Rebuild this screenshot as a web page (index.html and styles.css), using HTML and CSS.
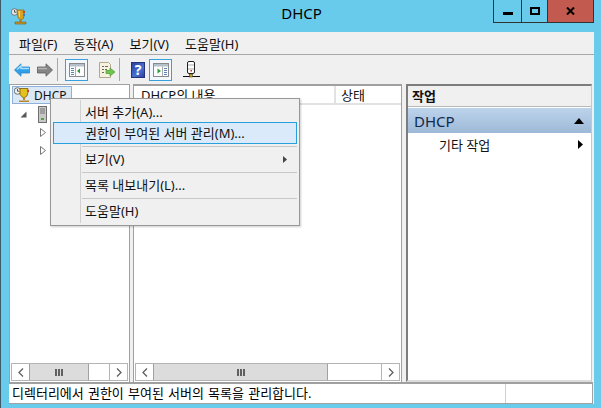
FILE: index.html
```html
<!DOCTYPE html>
<html lang="ko">
<head>
    <meta charset="UTF-8">
    <title>DHCP</title>
    <link rel="stylesheet" href="styles.css">
</head>
<body>
    <div class="window">
        <div class="titlebar">
            <svg class="app-icon" width="16" height="17" viewBox="0 0 16 17">
                <circle cx="3.500" cy="4" r="3.300" fill="#e4e4e4" stroke="#666" stroke-width=".8"/>
                <path d="M3.500 2v2.200h2" fill="none" stroke="#333" stroke-width=".8"/>
                <path d="M6 2h7v6q0 3-3 4-2-.5-3-2.500z" fill="#d8a322" stroke="#8a6514" stroke-width=".7"/>
                <path d="M7.500 3h1.500v6h-1z" fill="#f2d66a"/>
                <rect x="12" y="3" width="2" height="2" fill="#c8402f"/>
                <rect x="12" y="6" width="2" height="2" fill="#3a7bd5"/>
                <path d="M8.500 12h2v2h-2z" fill="#a87a1e"/>
                <path d="M4 14h11v2H4z" fill="#c8952c" stroke="#7a5a10" stroke-width=".6"/>
            </svg>
            <div class="title">DHCP</div>
            <div class="caption-btns">
                <div class="cap-btn cap-min"><span></span></div>
                <div class="cap-btn cap-max"><span></span></div>
                <div class="cap-btn cap-close">
                    <svg width="9" height="8" viewBox="0 0 9 8"><path d="M1 .5l7 7M8 .5l-7 7" stroke="#000" stroke-width="2" fill="none"/></svg>
                </div>
            </div>
        </div>

        <div class="client">
            <div class="menubar">
                <span>파일(F)</span>
                <span>동작(A)</span>
                <span>보기(V)</span>
                <span>도움말(H)</span>
            </div>

            <div class="toolbar">
                <div class="tool">
                    <svg width="16" height="14" viewBox="0 0 16 14"><path d="M.5 7L7 .8V4h8.500v6H7v3.200z" fill="#2f9fe8" stroke="#2a86cc" stroke-width=".8"/><path d="M3 6.500L7 3v2.500h8" fill="none" stroke="#a8e0ff" stroke-width="1.500"/></svg>
                </div>
                <div class="tool">
                    <svg width="16" height="14" viewBox="0 0 16 14"><path d="M15.500 7L9 .8V4H.5v6H9v3.200z" fill="#858585" stroke="#5a5a5a" stroke-width=".8"/><path d="M1 5.500h9" stroke="#b5b5b5" stroke-width="1.500"/></svg>
                </div>
                <div class="tool-sep"></div>
                <div class="tool tool-on tool-after-sep">
                    <svg width="16" height="14" viewBox="0 0 16 14"><rect x=".5" y=".5" width="15" height="13" fill="#fdfdfd" stroke="#8a8a8a"/><rect x="1" y="1" width="14" height="2.500" fill="#b4c0cc"/><path d="M2 5.500h3M2 7.500h3M2 9.500h3M2 11.500h3" stroke="#5b86b5"/><path d="M6.500 3.500V13" stroke="#aaa"/><path d="M11 5.500v5L8 8z" fill="#2e9b3c"/></svg>
                </div>
                <div class="tool tool-doc">
                    <svg width="17" height="16" viewBox="0 0 17 16"><path d="M.5.500h9l2 2v13H.5z" fill="#f7f1df" stroke="#b3a88e"/><path d="M3 4.500h2M3 7.500h2M3 10.500h2M6 4.500h3M6 7.500h2" stroke="#6a6a6a"/><path d="M7 8.500h4V6l5 4-5 4v-2.500H7z" fill="#72c650" stroke="#4a9c34" stroke-width=".7"/></svg>
                </div>
                <div class="tool-sep tool-sep-2"></div>
                <div class="help-icon">?</div>
                <div class="tool tool-on tool-after-help">
                    <svg width="16" height="14" viewBox="0 0 16 14"><rect x=".5" y=".5" width="15" height="13" fill="#fdfdfd" stroke="#8a8a8a"/><rect x="1" y="1" width="14" height="2.500" fill="#b4c0cc"/><path d="M11 5.500h3M11 7.500h3M11 9.500h3M11 11.500h3" stroke="#5b86b5"/><path d="M9.500 3.500V13" stroke="#aaa"/><path d="M4.500 5.500v5L8 8z" fill="#2e9b3c"/></svg>
                </div>
                <div class="tool tool-mic">
                    <svg width="17" height="18" viewBox="0 0 17 18"><rect x="4.500" y=".5" width="7" height="12" rx="1.500" fill="#fff" stroke="#222"/><path d="M5 4h6M5 8h6" stroke="#aaa"/><rect x="7.500" y="9" width="1.500" height="1.500" fill="#d22"/><path d="M0 15.500h17" stroke="#111"/><rect x="6.500" y="13" width="3" height="3" fill="#c9a227" stroke="#222" stroke-width=".5"/></svg>
                </div>
            </div>

            <div class="panes">
                <div class="pane pane-tree">
                    <div class="pane-body">
                        <div class="tree-root">
                            <svg width="16" height="16" viewBox="0 0 16 16">
                                <circle cx="3.500" cy="4" r="3.300" fill="#eee" stroke="#555" stroke-width=".8"/>
                                <path d="M3.500 2v2.200h2" fill="none" stroke="#333" stroke-width=".8"/>
                                <path d="M6 1.500h8v4q0 4-4 5.500-2.500-1-4-3.500z" fill="#e3c21c" stroke="#7a5a10" stroke-width=".8"/>
                                <rect x="13" y="3" width="2" height="2" fill="#c8402f"/>
                                <path d="M9 11h2v2H9zM5 13.500h10V15H5z" fill="#b8862b"/>
                            </svg>
                            <span>DHCP</span>
                        </div>
                        <div class="tree-node">
                            <svg width="7" height="7" viewBox="0 0 7 7"><path d="M6.500 .5v6h-6z" fill="#595959"/></svg>
                            <svg width="9" height="17" viewBox="0 0 9 17"><rect x=".5" y=".5" width="8" height="16" fill="#c8c8c8" stroke="#6e6e6e"/><path d="M2 3h5M2 5h5M2 7h5" stroke="#777"/><rect x="3" y="12" width="3" height="2" fill="#5aa03c"/></svg>
                        </div>
                        <div class="tree-child">
                            <svg width="6" height="9" viewBox="0 0 6 9"><path d="M.5 .5l5 4-5 4z" fill="#fff" stroke="#777"/></svg>
                        </div>
                        <div class="tree-child">
                            <svg width="6" height="9" viewBox="0 0 6 9"><path d="M.5 .5l5 4-5 4z" fill="#fff" stroke="#777"/></svg>
                        </div>
                    </div>
                    <div class="scrollbar">
                        <div class="sb-btn"><svg width="6" height="9" viewBox="0 0 6 9"><path d="M5 .5l-4 4 4 4" fill="none" stroke="#606060" stroke-width="1.300"/></svg></div>
                        <div class="sb-thumb sb-thumb-tree"><i></i><i></i><i></i></div>
                        <div class="sb-track"></div>
                        <div class="sb-btn"><svg width="6" height="9" viewBox="0 0 6 9"><path d="M1 .5l4 4-4 4" fill="none" stroke="#606060" stroke-width="1.300"/></svg></div>
                    </div>
                </div>

                <div class="pane pane-list">
                    <div class="list-head">
                        <div class="col col-name">DHCP의 내용</div>
                        <div class="col col-state">상태</div>
                    </div>
                    <div class="pane-body"></div>
                    <div class="scrollbar">
                        <div class="sb-btn"><svg width="6" height="9" viewBox="0 0 6 9"><path d="M5 .5l-4 4 4 4" fill="none" stroke="#606060" stroke-width="1.300"/></svg></div>
                        <div class="sb-thumb sb-thumb-list"><i></i><i></i><i></i></div>
                        <div class="sb-track"></div>
                        <div class="sb-btn"><svg width="6" height="9" viewBox="0 0 6 9"><path d="M1 .5l4 4-4 4" fill="none" stroke="#606060" stroke-width="1.300"/></svg></div>
                    </div>
                </div>

                <div class="pane-actions">
                    <div class="actions-head">작업</div>
                    <div class="actions-group">
                        <span>DHCP</span>
                        <svg width="10" height="6" viewBox="0 0 10 6"><path d="M5 0l5 6H0z" fill="#000"/></svg>
                    </div>
                    <div class="actions-item">
                        <span>기타 작업</span>
                        <svg width="5" height="9" viewBox="0 0 5 9"><path d="M0 0l5 4.500L0 9z" fill="#000"/></svg>
                    </div>
                </div>
            </div>

            <div class="statusbar">
                <div class="status-main">디렉터리에서 권한이 부여된 서버의 목록을 관리합니다.</div>
                <div class="status-side"></div>
            </div>
        </div>

        <div class="context-menu">
            <div class="cm-item cm-first">서버 추가(A)...</div>
            <div class="cm-item cm-active">권한이 부여된 서버 관리(M)...</div>
            <div class="cm-sep cm-sep-top"></div>
            <div class="cm-item cm-sub">보기(V)
                <svg width="4" height="7" viewBox="0 0 4 7"><path d="M0 0l4 3.500L0 7z" fill="#444"/></svg>
            </div>
            <div class="cm-sep"></div>
            <div class="cm-item">목록 내보내기(L)...</div>
            <div class="cm-sep"></div>
            <div class="cm-item">도움말(H)</div>
        </div>
    </div>
</body>
</html>
```

FILE: styles.css
```css
* {
    box-sizing: border-box;
}

html, body {
    margin: 0;
    padding: 0;
}

body {
    width: 601px;
    height: 408px;
    overflow: hidden;
    font-family: "Noto Sans", "Noto Sans CJK KR", sans-serif;
    font-size: 13px;
    color: #111;
}

.window {
    position: relative;
    width: 601px;
    height: 408px;
    background: #69cbec;
    border-left: 1px solid #3c5a68;
    padding: 0 7px 4px 8px;
    display: flex;
    flex-direction: column;
}

.titlebar {
    height: 32px;
    flex: none;
    display: flex;
    position: relative;
}

.app-icon {
    margin-top: 8px;
    margin-left: 2px;
}

.title {
    position: absolute;
    left: 0;
    right: 0;
    top: 3px;
    text-align: center;
    font-size: 15px;
    line-height: 20px;
    color: #000;
}

.caption-btns {
    position: absolute;
    right: 0;
    top: 0;
    display: flex;
    height: 23px;
    border: 1px solid #333;
    border-top: none;
}

.cap-btn {
    display: flex;
    align-items: center;
    justify-content: center;
}

.cap-min {
    width: 28px;
    border-right: 1px solid #333;
}

.cap-min span {
    display: block;
    width: 10px;
    height: 3px;
    background: #000;
    margin-top: 5px;
}

.cap-max {
    width: 26px;
    border-right: 1px solid #333;
}

.cap-max span {
    display: block;
    width: 10px;
    height: 8px;
    border: 2px solid #000;
}

.cap-close {
    width: 45px;
    background: #c35a50;
}

.client {
    flex: 1;
    min-height: 0;
    display: flex;
    flex-direction: column;
    background: #f0f0f0;
}

.menubar {
    height: 23px;
    flex: none;
    display: flex;
    align-items: center;
    gap: 16px;
    padding-left: 10px;
    border-bottom: 1px solid #a8a8a8;
}

.toolbar {
    height: 29px;
    flex: none;
    display: flex;
    align-items: center;
    padding-left: 1px;
    background: #f0f0f0;
}

.tool {
    width: 23px;
    height: 22px;
    flex: none;
    display: flex;
    align-items: center;
    justify-content: center;
}

.tool-on {
    background: #f2f8fd;
    border: 1px solid #3aa0dc;
}

.tool-after-sep {
    margin-left: 7px;
}

.tool-doc {
    margin-left: 8px;
}

.tool-after-help {
    margin-left: 4px;
}

.tool-mic {
    margin-left: 8px;
}

.tool-sep {
    width: 1px;
    height: 23px;
    flex: none;
    background: #a8a8a8;
    margin-left: 1px;
}

.tool-sep-2 {
    margin-left: 0;
}

.help-icon {
    width: 14px;
    height: 16px;
    flex: none;
    margin-left: 11px;
    text-align: center;
    font-size: 14px;
    font-weight: 700;
    line-height: 14px;
    color: #fff;
    background: linear-gradient(135deg, #2a3f9c, #4a72d0 60%, #2a3f9c);
    border: 1px solid #26337c;
}

.panes {
    flex: 1;
    min-height: 0;
    display: flex;
    background: #f0f0f0;
}

.pane {
    display: flex;
    flex-direction: column;
    background: #fff;
    border: 1px solid #a0a0a0;
    border-bottom: none;
}

.pane-tree {
    width: 121px;
    margin-right: 3px;
}

.pane-list {
    width: 269px;
    margin-right: 4px;
    border-top-width: 2px;
}

.pane-body {
    flex: 1;
    min-height: 0;
}

.tree-root {
    margin: 1px 0 0 2px;
    width: 60px;
    height: 18px;
    display: flex;
    align-items: center;
    gap: 4px;
    padding-left: 1px;
    font-size: 12px;
    background: #dbe8f6;
    border: 1px solid #8fb0d8;
}

.tree-node {
    display: flex;
    align-items: center;
    gap: 11px;
    height: 18px;
    margin-top: 1px;
    padding-left: 10px;
}

.tree-child {
    display: flex;
    align-items: center;
    height: 18px;
    padding-left: 30px;
}

.scrollbar {
    height: 18px;
    flex: none;
    display: flex;
    margin: 0 1px 1px;
    border: 1px solid #b4b4b4;
    background: #fff;
}

.sb-btn {
    width: 17px;
    flex: none;
    display: flex;
    align-items: center;
    justify-content: center;
}

.sb-track {
    flex: 1;
    border-right: 1px solid #b4b4b4;
}

.sb-thumb {
    display: flex;
    align-items: center;
    justify-content: center;
    gap: 1px;
    background: #dcdcdc;
    border-left: 1px solid #a0a0a0;
    border-right: 1px solid #a0a0a0;
    flex: none;
}

.sb-thumb i {
    width: 2px;
    height: 7px;
    background: #606060;
}

.sb-thumb-tree {
    width: 60px;
}

.sb-thumb-list {
    width: 175px;
}

.list-head {
    height: 19px;
    flex: none;
    display: flex;
    border-bottom: 2px solid #e2e2e2;
}

.col {
    line-height: 18px;
    padding-left: 7px;
}

.col-name {
    width: 202px;
    border-right: 2px solid #e2e2e2;
}

.col-state {
    padding-left: 5px;
}

.pane-actions {
    width: 186px;
    flex: none;
    display: flex;
    flex-direction: column;
    background: #fff;
    border-top: 2px solid #7d7d7d;
    border-left: 2px solid #7d7d7d;
    border-right: 1px solid #c8c8c8;
    border-bottom: 2px solid #dcdcdc;
}

.actions-head {
    height: 21px;
    flex: none;
    line-height: 20px;
    padding-left: 4px;
    font-weight: 700;
    background: #f0f0f0;
    border-bottom: 1px solid #b8b8b8;
}

.actions-group {
    height: 25px;
    margin-top: 1px;
    flex: none;
    display: flex;
    align-items: center;
    justify-content: space-between;
    padding: 0 7px 0 6px;
    font-size: 15px;
    color: #0f2a4a;
    background: linear-gradient(#bdd3ec, #9db9d7);
}

.actions-item {
    height: 22px;
    flex: none;
    display: flex;
    align-items: center;
    justify-content: space-between;
    padding: 0 8px 0 31px;
}

.statusbar {
    height: 22px;
    flex: none;
    margin-right: 1px;
    display: flex;
    background: #fff;
    border-top: 2px solid #a0a0a0;
    border-bottom: 1px solid #a0a0a0;
    border-right: 1px solid #a0a0a0;
}

.status-main {
    width: 497px;
    line-height: 19px;
    padding-left: 3px;
    word-spacing: 0.8px;
    color: #000;
    border-right: 1px solid #d0d0d0;
}

.status-side {
    flex: 1;
}

.context-menu {
    position: absolute;
    left: 49px;
    top: 98px;
    width: 250px;
    height: 128px;
    padding: 1px 2px;
    background: #f0f0f0;
    border: 1px solid #979797;
    box-shadow: 1px 1px 2px rgba(0, 0, 0, 0.2);
}

.context-menu::before {
    content: "";
    position: absolute;
    left: 29px;
    top: 1px;
    bottom: 2px;
    width: 1px;
    background: #d0d0d0;
}

.cm-item {
    position: relative;
    height: 25px;
    line-height: 25px;
    padding-left: 32px;
}

.cm-first {
    height: 22px;
    line-height: 24px;
}

.cm-active {
    height: 22px;
    background: #daeafa;
    border: 1px solid #28a0dc;
    line-height: 20px;
    padding-left: 31px;
}

.cm-sub {
    display: flex;
    align-items: center;
    justify-content: space-between;
    padding-right: 10px;
}

.cm-sep {
    height: 1px;
    margin-left: 29px;
    background: #c8c8c8;
}

.cm-sep-top {
    margin-top: 2px;
}
```
